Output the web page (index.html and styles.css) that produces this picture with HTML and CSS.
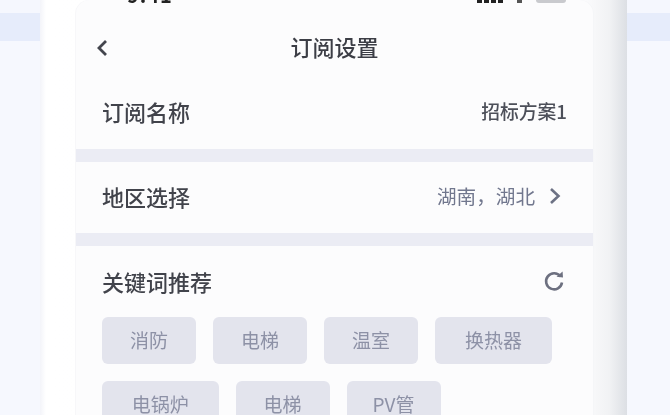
FILE: index.html
```html
<!DOCTYPE html>
<html>
  <head>
    <meta charset="utf-8"/>
    <title>订阅设置</title>
    <link rel="stylesheet" href="styles.css">
  </head>
  <body>
    <div class="phone">
      <div class="screen">
        <div class="status">
          <span class="time">9:41</span>
          <div class="status-right">
            <div class="signal"><i></i><i></i><i></i><i></i></div>
            <div class="wifi"></div>
            <div class="battery"></div>
          </div>
        </div>
        <div class="header">
          <svg class="back" width="12" height="18" viewBox="0 0 12 18"><path d="M10 2 L3 9 L10 16" fill="none" stroke="#43454d" stroke-width="2.8"/></svg>
          <span class="title">订阅设置</span>
        </div>
        <div class="row name-row">
          <span class="label">订阅名称</span>
          <span class="value">招标方案1</span>
        </div>
        <div class="divider"></div>
        <div class="row area-row">
          <span class="label">地区选择</span>
          <div class="area">
            <span class="area-text">湖南，湖北</span>
            <svg width="12" height="18" viewBox="0 0 12 18"><path d="M2 2 L9.5 9 L2 16" fill="none" stroke="#6d7285" stroke-width="2.6"/></svg>
          </div>
        </div>
        <div class="divider"></div>
        <div class="keywords">
          <div class="kw-head">
            <span class="label">关键词推荐</span>
            <svg width="22" height="22" viewBox="0 0 22 22"><path d="M17.5 6.5 A8 8 0 1 0 19 12.5" fill="none" stroke="#6d7080" stroke-width="2.6"/><path d="M13.5 6.8 L20 7.6 L19.6 1.4 Z" fill="#6d7080"/></svg>
          </div>
          <div class="tags">
            <span class="tag w94">消防</span>
            <span class="tag w94">电梯</span>
            <span class="tag w94">温室</span>
            <span class="tag w117">换热器</span>
            <span class="tag w116">电锅炉</span>
            <span class="tag w94">电梯</span>
            <span class="tag w94">PV管</span>
          </div>
        </div>
      </div>
    </div>
  </body>
</html>
```

FILE: styles.css
```css
html, body{
  margin: 0;
}
body{
  height: 415px;
  overflow: hidden;
  font-family: "Noto Sans CJK SC", "Noto Sans", sans-serif;
  background: linear-gradient(#f5f7fe 13px, #e6ecfb 13px, #e6ecfb 41px, #f6f8fe 41px);
  padding-left: 40px;
}
.phone{
  width: 517px;
  height: 415px;
  padding: 0 34px 0 36px;
  background: linear-gradient(90deg, #f3f4f9 0, #ffffff 6px, #fdfdfe 92%, #f1f2f4 97%, #dcdfe4 100%);
  filter: blur(0.7px);
}
.screen{
  height: 415px;
  background: #fcfcfd;
  border-radius: 14px 14px 0 0;
  box-shadow: -1px 0 0 #f7f7f9, 1px 0 0 #f5f6f8;
  overflow: hidden;
}
.status{
  height: 3px;
  padding: 0 27px 0 51px;
  display: flex;
  justify-content: space-between;
  align-items: flex-end;
  overflow: hidden;
}
.time{
  font-size: 20px;
  line-height: 20px;
  font-weight: 700;
  color: #222;
  flex: none;
  letter-spacing: 1px;
  margin-bottom: -2px;
}
.status-right{
  display: flex;
  align-items: flex-end;
  gap: 14px;
  flex: none;
}
.signal{
  display: flex;
  gap: 2px;
}
.signal i{
  width: 5px;
  height: 12px;
  background: #222;
}
.wifi{
  width: 5px;
  height: 12px;
  background: #555;
}
.battery{
  width: 30px;
  height: 12px;
  background: #c9cace;
  border-radius: 3px;
}
.header{
  height: 90px;
  display: flex;
  align-items: center;
  justify-content: center;
  position: relative;
  padding-bottom: 5px;
  box-sizing: border-box;
}
.back{
  position: absolute;
  left: 20px;
  top: 36px;
}
.title{
  font-size: 22px;
  font-weight: 500;
  color: #3c3e46;
}
.row{
  display: flex;
  justify-content: space-between;
  align-items: center;
  padding: 0 26px;
}
.name-row{
  height: 56px;
  align-items: flex-start;
}
.area-row{
  height: 71px;
  padding-bottom: 4px;
  box-sizing: border-box;
}
.label{
  font-size: 22px;
  font-weight: 500;
  line-height: 36px;
  color: #41434b;
}
.value{
  font-size: 18.8px;
  font-weight: 500;
  line-height: 36px;
  color: #4c4f59;
}
.divider{
  height: 13px;
  background: #ebecf4;
}
.area{
  display: flex;
  align-items: center;
  gap: 14px;
  margin-right: 6px;
}
.area-text{
  font-size: 19.6px;
  color: #71778e;
}
.keywords{
  padding: 15px 28px 0 26px;
}
.kw-head{
  display: flex;
  justify-content: space-between;
  align-items: center;
  height: 40px;
  margin-bottom: 16px;
}
.tags{
  display: flex;
  flex-wrap: wrap;
  gap: 17px;
}
.tag{
  height: 47px;
  line-height: 45px;
  text-align: center;
  font-size: 19px;
  color: #8d91a6;
  background: #e3e4ed;
  border-radius: 6px;
}
.w94{
  width: 94px;
}
.w116{
  width: 116.5px;
}
.w117{
  width: 117px;
}
```
